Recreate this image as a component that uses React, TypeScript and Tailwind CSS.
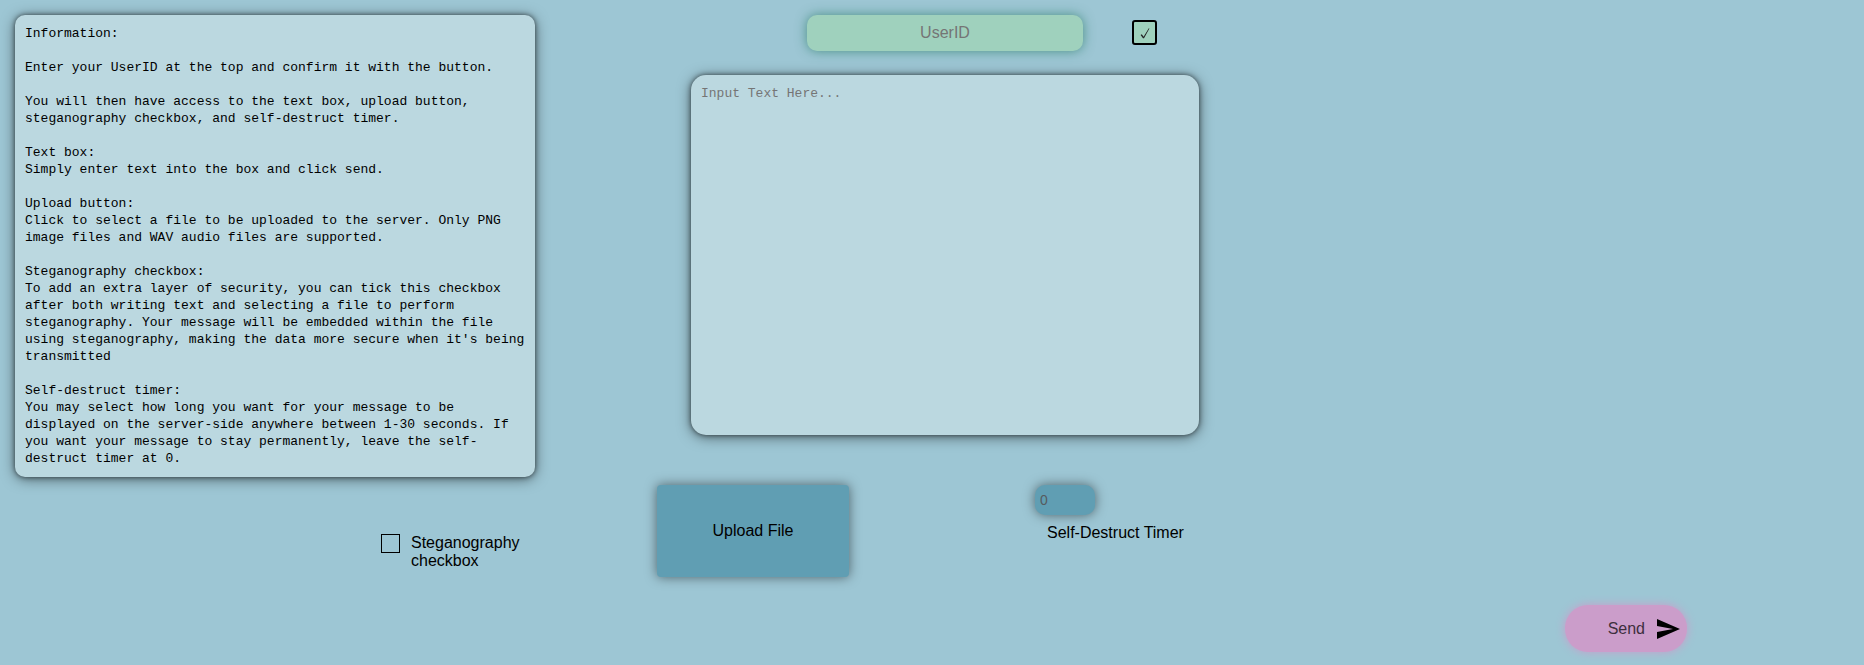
import React from "react";

const INFORMATION = `Information:

Enter your UserID at the top and confirm it with the button.

You will then have access to the text box, upload button, steganography checkbox, and self-destruct timer.

Text box:
Simply enter text into the box and click send.

Upload button:
Click to select a file to be uploaded to the server. Only PNG image files and WAV audio files are supported.

Steganography checkbox:
To add an extra layer of security, you can tick this checkbox after both writing text and selecting a file to perform steganography. Your message will be embedded within the file using steganography, making the data more secure when it's being transmitted

Self-destruct timer:
You may select how long you want for your message to be displayed on the server-side anywhere between 1-30 seconds. If you want your message to stay permanently, leave the self-destruct timer at 0.`;

function InfoPanel() {
  return (
    <section className="rounded-[10px] bg-[#bbd8e0] p-[10px] font-['Liberation_Mono',monospace] text-[13px] leading-[17px] whitespace-pre-wrap text-black shadow-[0_0_5px_#00000090,0_2px_14px_#00000080]">
      {INFORMATION}
    </section>
  );
}

function StegoOption() {
  return (
    <div className="mt-[57px] mr-2 flex items-start gap-[11px] self-end">
      <input
        id="stego"
        type="checkbox"
        className="size-[19px] appearance-none border border-black checked:bg-[#609eb3]"
      />
      <label htmlFor="stego" className="w-[116px]">
        Steganography checkbox
      </label>
    </div>
  );
}

function UserRow() {
  return (
    <div className="grid grid-cols-[1fr_276px_1fr] items-start pl-[34px]">
      <input
        aria-label="UserID"
        placeholder="UserID"
        className="col-start-2 h-9 rounded-[10px] bg-[#9fd1bd] text-center shadow-[0_0_12px_#2f7f6bc0] outline-none placeholder:text-[#757575]"
      />
      <button
        aria-label="Confirm UserID"
        className="mt-[5px] ml-[49px] flex size-[25px] items-center justify-center rounded-[3px] border-2 border-black bg-[#9fd1bd]"
      >
        <svg viewBox="0 0 10 12" className="h-3 w-[10px]" aria-hidden="true">
          <path d="M0.6 8 1.8 7.3 3.6 9.8 8.8 1.2 9.4 1.6 4 11.2 3 11.2Z" fill="#222" />
        </svg>
      </button>
    </div>
  );
}

function Controls() {
  return (
    <div className="mt-[50px] flex items-start justify-between">
      <button className="h-[92px] w-[192px] rounded-[4px] bg-[#609eb3] shadow-[0_0_12px_#00000080]">
        Upload File
      </button>
      <div className="mr-1 flex w-[160px] flex-col items-start">
        <input
          id="timer"
          type="number"
          min={0}
          max={30}
          placeholder="0"
          className="h-[30px] w-[60px] appearance-none rounded-[10px] bg-[#609eb3] px-[5px] text-[14px] shadow-[0_0_12px_#00000080] outline-none placeholder:text-[#565b5e]"
        />
        <label htmlFor="timer" className="mt-[9px] ml-3 whitespace-nowrap">
          Self-Destruct Timer
        </label>
      </div>
    </div>
  );
}

function SendButton() {
  return (
    <button className="flex h-[47px] w-[122px] items-center justify-end gap-3 rounded-[23px] bg-[#cb9dca] pr-[7px] text-[#3d2f3d] shadow-[0_0_10px_#cb9dca]">
      Send
      <svg viewBox="0 0 23 20" className="h-5 w-[23px] fill-black" aria-hidden="true">
        <path d="M0 0 23 10 0 20V13L16 10 0 7Z" />
      </svg>
    </button>
  );
}

export default function App() {
  return (
    <main className="grid min-h-screen grid-cols-[520fr_122fr_542fr_366fr_284fr] bg-[#9dc6d4] px-[15px] pt-[15px] pb-[13px] font-['Liberation_Sans',Arial,sans-serif] text-[16px] leading-[18px] text-black">
      <div className="col-start-1 flex flex-col">
        <InfoPanel />
        <StegoOption />
      </div>
      <div className="col-start-3 flex flex-col">
        <UserRow />
        <textarea
          aria-label="Message"
          placeholder="Input Text Here..."
          className="mt-6 ml-[34px] h-[360px] resize-none rounded-[15px] bg-[#bbd8e0] p-[10px] font-['Liberation_Mono',monospace] text-[13px] leading-[17px] shadow-[0_0_5px_#00000090,0_2px_14px_#00000080] outline-none placeholder:text-[#757575]"
        />
        <Controls />
      </div>
      <div className="col-start-5 self-end">
        <SendButton />
      </div>
    </main>
  );
}
